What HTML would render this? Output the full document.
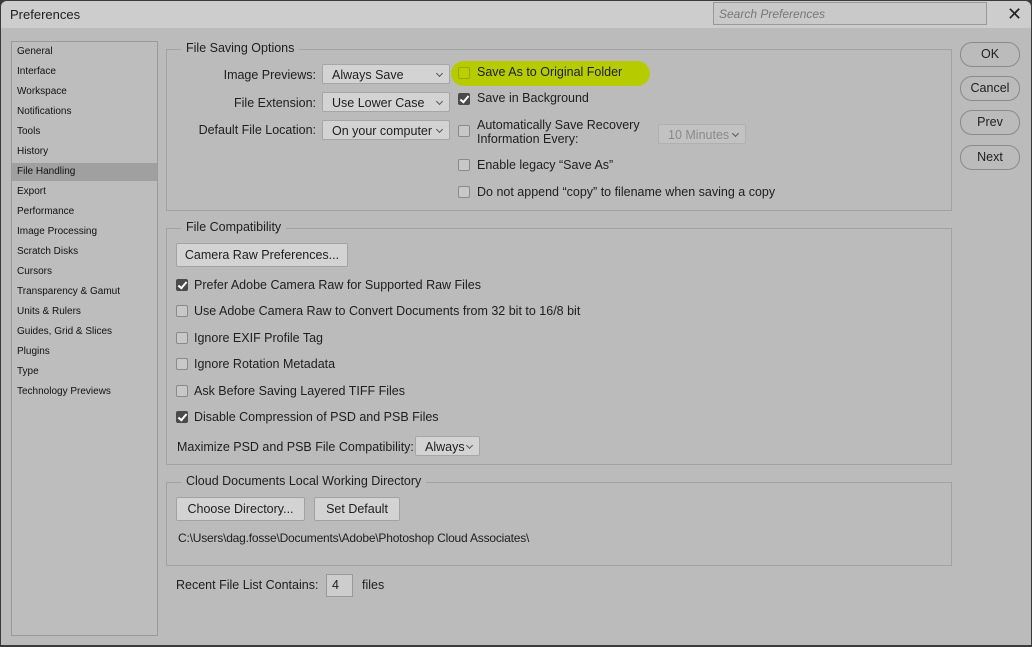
<!DOCTYPE html>
<html><head><style>
*{box-sizing:border-box;margin:0;padding:0}
body{width:1032px;height:647px;overflow:hidden;background:#3a3a3a;font-family:"Liberation Sans",sans-serif;font-size:12px;color:#1e1e1e;position:relative}
.win{position:absolute;left:1px;top:1px;width:1030px;height:644px;background:#bbbbbb;border-radius:6px 6px 0 0;overflow:hidden}
.title{position:absolute;left:0;top:0;width:100%;height:27px;background:#cdcdcd}
.a{position:absolute;white-space:nowrap}
.side{position:absolute;left:10px;top:40px;width:147px;height:595px;border:1px solid #9a9a9a;background:#bdbdbd}
.side div{position:absolute;left:5px;font-size:10px;color:#111}
.grp{position:absolute;border:1px solid #a2a2a2}
.gt{position:absolute;background:#bbbbbb;padding:0 5px;font-size:12.5px;color:#1e1e1e}
.sel{position:absolute;height:20px;background:#d3d3d3;border:1px solid #a6a6a6;border-radius:2px;padding:3px 9px;font-size:12.5px}
.sel:after{content:"";position:absolute;right:7px;top:6px;width:4px;height:4px;border:solid #555;border-width:0 1px 1px 0;transform:rotate(45deg)}
.cb{position:absolute;width:12px;height:12px;border:1px solid #8a8a8a;border-radius:2px;background:#c8c8c8}
.cb.on{background:#4a4a4a;border-color:#4a4a4a}
.cb.on:after{content:"";position:absolute;left:3px;top:0px;width:3px;height:7px;border:solid #fff;border-width:0 2px 2px 0;transform:rotate(40deg)}
.lbl{font-size:12.5px}
.btn{position:absolute;height:24px;background:#d3d3d3;border:1px solid #a2a2a2;border-radius:2px;text-align:center;line-height:22px;font-size:12.5px}
.pill{position:absolute;left:959px;width:60px;height:25px;border:1px solid #8a8a8a;border-radius:12px;text-align:center;line-height:23px;font-size:12.5px}
</style></head><body>
<div class="win">
<div class="title"></div>
<div class="a" style="left:9px;top:6px;font-size:13px">Preferences</div>
<div class="a" style="left:712px;top:1px;width:274px;height:23px;border:1px solid #999;background:#c9c9c9;font-style:italic;color:#777;padding:4px 5px;font-size:12px">Search Preferences</div>
<div class="a" style="left:1006px;top:3px;font-size:18px;color:#222">✕</div>

<div class="side">
<div style="top:4px">General</div><div style="top:24px">Interface</div><div style="top:44px">Workspace</div><div style="top:64px">Notifications</div><div style="top:84px">Tools</div><div style="top:104px">History</div>
<div style="left:0;top:121px;width:145px;height:18px;background:#a0a0a0"></div>
<div style="top:124px">File Handling</div><div style="top:144px">Export</div><div style="top:164px">Performance</div><div style="top:184px">Image Processing</div><div style="top:204px">Scratch Disks</div><div style="top:224px">Cursors</div><div style="top:244px">Transparency &amp; Gamut</div><div style="top:264px">Units &amp; Rulers</div><div style="top:284px">Guides, Grid &amp; Slices</div><div style="top:304px">Plugins</div><div style="top:324px">Type</div><div style="top:344px">Technology Previews</div>
</div>

<div class="grp" style="left:165px;top:48px;width:786px;height:162px"></div>
<div class="gt" style="left:180px;top:40px">File Saving Options</div>
<div class="a lbl" style="right:715px;top:67px">Image Previews:</div>
<div class="a lbl" style="right:715px;top:95px">File Extension:</div>
<div class="a lbl" style="right:715px;top:122px">Default File Location:</div>
<div class="sel" style="left:321px;top:63px;width:128px">Always Save</div>
<div class="sel" style="left:321px;top:91px;width:128px">Use Lower Case</div>
<div class="sel" style="left:321px;top:119px;width:128px">On your computer</div>
<div class="a" style="left:450px;top:60px;width:199px;height:25px;border-radius:13px;background:#b6cc00"></div>
<div class="cb" style="left:457px;top:66px;background:#bcd000;border-color:#9aa800"></div><div class="a lbl" style="left:476px;top:64px">Save As to Original Folder</div>
<div class="cb on" style="left:457px;top:92px"></div><div class="a lbl" style="left:476px;top:90px">Save in Background</div>
<div class="cb" style="left:457px;top:124px"></div><div class="a lbl" style="left:476px;top:117px;line-height:14px">Automatically Save Recovery<br>Information Every:</div>
<div class="sel" style="left:657px;top:123px;width:88px;color:#8a8a8a;background:#c2c2c2;border-color:#b0b0b0">10 Minutes</div>
<div class="cb" style="left:457px;top:158px"></div><div class="a lbl" style="left:476px;top:157px">Enable legacy “Save As”</div>
<div class="cb" style="left:457px;top:185px"></div><div class="a lbl" style="left:476px;top:184px">Do not append “copy” to filename when saving a copy</div>

<div class="grp" style="left:165px;top:227px;width:786px;height:237px"></div>
<div class="gt" style="left:180px;top:219px">File Compatibility</div>
<div class="btn" style="left:175px;top:242px;width:172px">Camera Raw Preferences...</div>
<div class="cb on" style="left:175px;top:278px"></div><div class="a lbl" style="left:193px;top:277px">Prefer Adobe Camera Raw for Supported Raw Files</div>
<div class="cb" style="left:175px;top:304px"></div><div class="a lbl" style="left:193px;top:303px">Use Adobe Camera Raw to Convert Documents from 32 bit to 16/8 bit</div>
<div class="cb" style="left:175px;top:331px"></div><div class="a lbl" style="left:193px;top:330px">Ignore EXIF Profile Tag</div>
<div class="cb" style="left:175px;top:357px"></div><div class="a lbl" style="left:193px;top:356px">Ignore Rotation Metadata</div>
<div class="cb" style="left:175px;top:384px"></div><div class="a lbl" style="left:193px;top:383px">Ask Before Saving Layered TIFF Files</div>
<div class="cb on" style="left:175px;top:410px"></div><div class="a lbl" style="left:193px;top:409px">Disable Compression of PSD and PSB Files</div>
<div class="a lbl" style="left:176px;top:439px">Maximize PSD and PSB File Compatibility:</div>
<div class="sel" style="left:414px;top:435px;width:65px">Always</div>

<div class="grp" style="left:165px;top:481px;width:786px;height:84px"></div>
<div class="gt" style="left:180px;top:473px">Cloud Documents Local Working Directory</div>
<div class="btn" style="left:175px;top:496px;width:129px">Choose Directory...</div>
<div class="btn" style="left:313px;top:496px;width:86px">Set Default</div>
<div class="a" style="left:177px;top:530px;font-size:12px;letter-spacing:-0.2px">C:\Users\dag.fosse\Documents\Adobe\Photoshop Cloud Associates\</div>

<div class="a lbl" style="left:175px;top:577px">Recent File List Contains:</div>
<div class="a" style="left:325px;top:573px;width:27px;height:23px;border:1px solid #999;background:#cdcdcd;padding:3px 5px;font-size:12.5px">4</div>
<div class="a lbl" style="left:361px;top:577px">files</div>

<div class="pill" style="top:41px">OK</div>
<div class="pill" style="top:75px">Cancel</div>
<div class="pill" style="top:109px">Prev</div>
<div class="pill" style="top:144px">Next</div>
</div>
</body></html>
